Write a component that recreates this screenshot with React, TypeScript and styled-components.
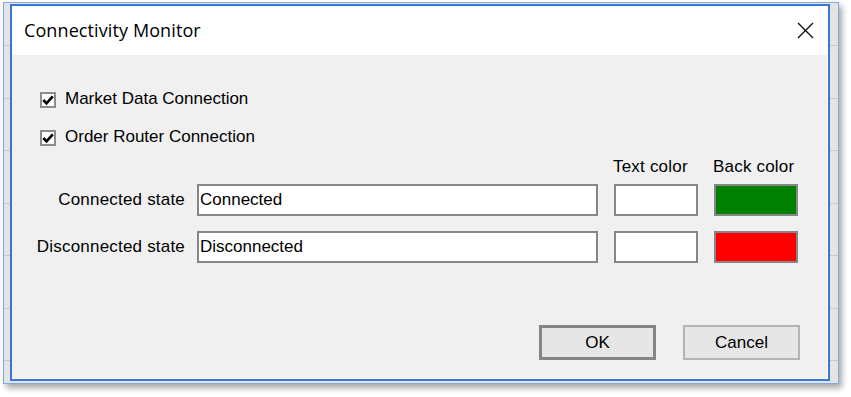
import React from "react";
import styled, { createGlobalStyle } from "styled-components";

const GlobalStyle = createGlobalStyle`
  html, body {
    margin: 0;
    padding: 0;
    background: #ffffff;
  }
  body {
    width: 851px;
    height: 397px;
    overflow: hidden;
  }
`;

// the app window behind the dialog (light blue frame, grid rows)
const BackWindow = styled.div`
  box-sizing: border-box;
  margin: 2px 0 0 3px;
  width: 836px;
  height: 382px;
  border: 1px solid #7eaae3;
  padding: 1px 0 0 6px;
  background-color: #e4e4e4;
  background-image: repeating-linear-gradient(
    to bottom,
    transparent 0,
    transparent 42px,
    #c9c9c9 42px,
    #c9c9c9 43px,
    transparent 43px,
    transparent 52.5px
  );
  box-shadow: 3px 4px 6px rgba(0, 0, 0, 0.35);
`;

const Dialog = styled.div`
  box-sizing: border-box;
  width: 820px;
  height: 377px;
  border: 2px solid #3a77d4;
  background: #f0f0f0;
  box-shadow: inset 0 -1px 0 #ffffff, inset -1px 0 0 #ffffff;
  display: flex;
  flex-direction: column;
  font-family: "Liberation Sans", Arial, sans-serif;
  font-size: 17px;
  color: #000;
`;

const TitleBar = styled.div`
  height: 49px;
  flex: none;
  background: #ffffff;
  display: flex;
  align-items: center;
  justify-content: space-between;
  padding-left: 12px;
`;

const Title = styled.span`
  font-family: "Open Sans", "Noto Sans", sans-serif;
  font-size: 18px;
  letter-spacing: 0.1px;
  color: #000;
  margin-top: -2px;
`;

const CloseButton = styled.button`
  width: 46px;
  height: 49px;
  border: 0;
  padding: 0;
  background: transparent;
  display: flex;
  align-items: center;
  justify-content: center;
`;

const Body = styled.div`
  flex: 1;
  padding: 34px 28px 0 28px;
  display: flex;
  flex-direction: column;
`;

const CheckList = styled.div`
  display: flex;
  flex-direction: column;
  gap: 18px;
`;

const CheckRow = styled.label`
  height: 20px;
  display: flex;
  align-items: center;
  gap: 9px;
`;

const Box = styled.span`
  box-sizing: border-box;
  width: 16px;
  height: 16px;
  border: 2px solid #8c8c8c;
  background: #fff;
  display: flex;
  align-items: center;
  justify-content: center;
  margin-top: 1px;
`;

const Grid = styled.div`
  margin-top: 9px;
  display: grid;
  grid-template-columns: 141px 401px 84px 84px;
  grid-template-rows: 20px 40px 47px;
  column-gap: 16px;
  align-items: end;
`;

const HeadCell = styled.div<{ $col: number }>`
  grid-column: ${(p) => p.$col};
  align-self: center;
  white-space: nowrap;
  margin-left: -1px;
  letter-spacing: 0.2px;
  margin-top: 1px;
`;

const RowLabel = styled.div`
  align-self: end;
  height: 33px;
  display: flex;
  align-items: center;
  justify-content: flex-end;
  white-space: nowrap;
  letter-spacing: 0.2px;
  margin-right: -4px;
`;

const TextBox = styled.div`
  box-sizing: border-box;
  height: 32px;
  border: 2px solid #868686;
  background: #fff;
  padding: 0 3px 0 1px;
  display: flex;
  align-items: center;
`;

const Swatch = styled.div<{ $color: string }>`
  box-sizing: border-box;
  height: 32px;
  border: 2px solid #868686;
  background: ${(p) => p.$color};
`;

const Buttons = styled.div`
  margin-top: auto;
  margin-bottom: 19px;
  display: flex;
  justify-content: flex-end;
  gap: 27px;
`;

const Button = styled.button<{ $default?: boolean }>`
  box-sizing: border-box;
  width: 117px;
  height: 35px;
  background: #e6e6e6;
  border: ${(p) => (p.$default ? "3px solid #858585" : "2px solid #b4b4b4")};
  font-family: "Liberation Sans", Arial, sans-serif;
  font-size: 17px;
  color: #000;
  padding: 0;
`;

const Check = () => (
  <svg width="12" height="12" viewBox="0 0 12 12">
    <path d="M1.3 6 L4.5 9.4 L10.8 2.4" fill="none" stroke="#000" strokeWidth="2.6" />
  </svg>
);

const rows = [
  { label: "Connected state", value: "Connected", back: "#008000" },
  { label: "Disconnected state", value: "Disconnected", back: "#ff0000" },
];

export default function App() {
  return (
    <>
      <GlobalStyle />
      <BackWindow>
        <Dialog>
          <TitleBar>
            <Title>Connectivity Monitor</Title>
            <CloseButton>
              <svg width="17" height="17" viewBox="0 0 17 17">
                <path d="M1 1 L16 16 M16 1 L1 16" stroke="#111" strokeWidth="1.4" />
              </svg>
            </CloseButton>
          </TitleBar>
          <Body>
            <CheckList>
              <CheckRow>
                <Box><Check /></Box>
                Market Data Connection
              </CheckRow>
              <CheckRow>
                <Box><Check /></Box>
                Order Router Connection
              </CheckRow>
            </CheckList>
            <Grid>
              <HeadCell $col={3}>Text color</HeadCell>
              <HeadCell $col={4}>Back color</HeadCell>
              {rows.map((r) => (
                <React.Fragment key={r.label}>
                  <RowLabel>{r.label}</RowLabel>
                  <TextBox>{r.value}</TextBox>
                  <Swatch $color="#ffffff" />
                  <Swatch $color={r.back} />
                </React.Fragment>
              ))}
            </Grid>
            <Buttons>
              <Button $default>OK</Button>
              <Button>Cancel</Button>
            </Buttons>
          </Body>
        </Dialog>
      </BackWindow>
    </>
  );
}
